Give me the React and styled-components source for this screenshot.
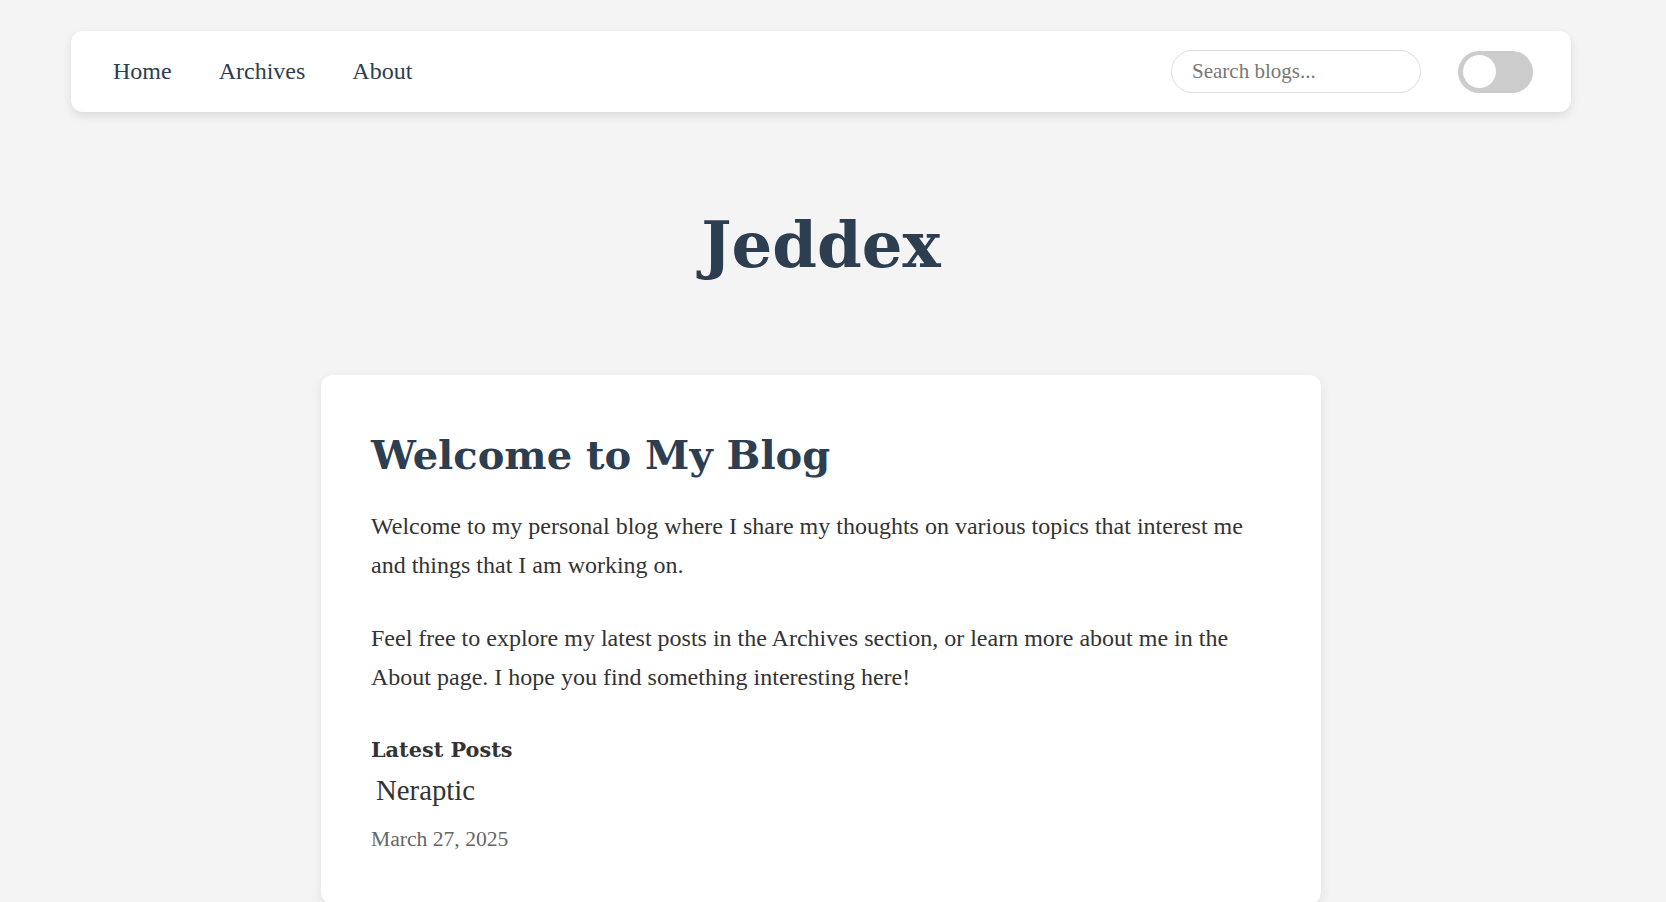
import React, { useState } from 'react';
import styled, { createGlobalStyle } from 'styled-components';

const GlobalStyle = createGlobalStyle`
  body {
    margin: 0;
    background: #f4f4f4;
    font-family: "Liberation Serif", "Times New Roman", serif;
    color: #333;
  }
`;

const Page = styled.div`
  padding: 31px 24px 0 0;
`;

const NavBar = styled.nav`
  max-width: 1500px;
  height: 81px;
  margin: 0 auto;
  box-sizing: border-box;
  padding: 0 38px 0 42px;
  display: flex;
  align-items: center;
  background: #fff;
  border-radius: 12px;
  box-shadow: 0 4px 10px rgba(0, 0, 0, 0.1);
`;

const NavLinks = styled.div`
  display: flex;
  gap: 47px;
  flex: 1;
`;

const NavLink = styled.a`
  font-size: 24px;
  color: #2c3e50;
  text-decoration: none;
  cursor: pointer;
`;

const Search = styled.input`
  width: 250px;
  height: 43px;
  box-sizing: border-box;
  padding: 0 20px;
  border: 1px solid #ddd;
  border-radius: 25px;
  font-family: "Liberation Serif", serif;
  font-size: 21px;
  color: #333;
  outline: none;
  &::placeholder {
    color: #777;
  }
`;

const Toggle = styled.button`
  margin-left: 37px;
  width: 75px;
  height: 42px;
  border: none;
  padding: 0 5px;
  border-radius: 21px;
  background: ${({ $on }) => ($on ? '#2c3e50' : '#ccc')};
  display: flex;
  align-items: center;
  justify-content: ${({ $on }) => ($on ? 'flex-end' : 'flex-start')};
  cursor: pointer;
`;

const Knob = styled.span`
  width: 33px;
  height: 33px;
  border-radius: 50%;
  background: #fff;
`;

const SiteTitle = styled.h1`
  margin: 101px 0 0;
  text-align: center;
  font-family: "DejaVu Serif", serif;
  font-weight: bold;
  font-size: 64px;
  line-height: 64px;
  color: #2c3e50;
`;

const Card = styled.main`
  width: 1000px;
  margin: 98px auto 0;
  box-sizing: border-box;
  padding: 56px 50px 50px;
  background: #fff;
  border-radius: 12px;
  box-shadow: 0 4px 12px rgba(0, 0, 0, 0.08);
`;

const Heading = styled.h2`
  margin: 0;
  font-family: "DejaVu Serif", serif;
  font-weight: bold;
  font-size: 40px;
  line-height: 48px;
  color: #2c3e50;
`;

const Para = styled.p`
  margin: ${({ $first }) => ($first ? '28px' : '34px')} 0 0;
  font-size: 24px;
  line-height: 39px;
  color: #333;
`;

const SectionTitle = styled.h3`
  margin: 40px 0 0;
  font-family: "DejaVu Serif", serif;
  font-weight: bold;
  font-size: 20.8px;
  line-height: 26px;
  color: #333;
`;

const PostLink = styled.a`
  display: block;
  margin-top: 9px;
  padding-left: 5px;
  font-size: 28.8px;
  line-height: 36px;
  color: #333;
  text-decoration: none;
`;

const PostDate = styled.div`
  margin-top: 16px;
  font-size: 21.6px;
  line-height: 30px;
  color: #666;
`;

export default function App() {
  const [dark, setDark] = useState(false);

  return (
    <>
      <GlobalStyle />
      <Page>
        <NavBar>
          <NavLinks>
            <NavLink>Home</NavLink>
            <NavLink>Archives</NavLink>
            <NavLink>About</NavLink>
          </NavLinks>
          <Search placeholder="Search blogs..." />
          <Toggle $on={dark} onClick={() => setDark(!dark)}>
            <Knob />
          </Toggle>
        </NavBar>

        <SiteTitle>Jeddex</SiteTitle>

        <Card>
          <Heading>Welcome to My Blog</Heading>
          <Para $first>
            Welcome to my personal blog where I share my thoughts on various topics that interest me
            and things that I am working on.
          </Para>
          <Para>
            Feel free to explore my latest posts in the Archives section, or learn more about me in the
            About page. I hope you find something interesting here!
          </Para>
          <SectionTitle>Latest Posts</SectionTitle>
          <PostLink>Neraptic</PostLink>
          <PostDate>March 27, 2025</PostDate>
        </Card>
      </Page>
    </>
  );
}
